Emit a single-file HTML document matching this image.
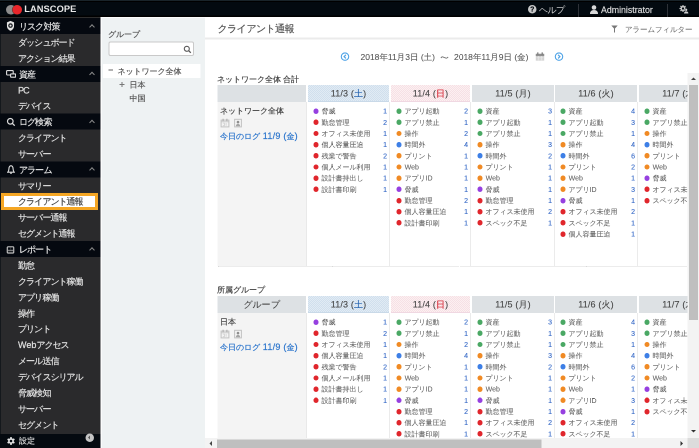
<!DOCTYPE html>
<html lang="ja"><head><meta charset="utf-8">
<style>
*{margin:0;padding:0;box-sizing:border-box}
html,body{width:699px;height:448px;overflow:hidden;background:#fff;font-family:"Liberation Sans",sans-serif;color:#333}
.abs{position:absolute}
#top{position:absolute;left:0;top:0;width:699px;height:17px;background:#030a10;border-top:1px solid #19242a;box-shadow:inset 0 1px 0 #000, inset 0 -1.5px 0 #000}
#logo{position:absolute;left:6px;top:4px;width:17px;height:11px}
#logo .g{position:absolute;left:0.2px;top:0px;width:9.6px;height:9.6px;border-radius:50%;background:#8c8c8c}
#logo .r{position:absolute;left:6.6px;top:0px;width:9.6px;height:9.6px;border-radius:50%;background:#e8262b;box-shadow:-0.6px 0 0 #5a3a30}
#brand{position:absolute;left:24.3px;top:2.2px;font-size:9.3px;font-weight:bold;color:#e8e8e8;letter-spacing:0.05px;line-height:12px;-webkit-text-stroke:0}
#side{position:absolute;left:0;top:17px;width:100.5px;height:431px;background:#2a2a2c;border-top:1px solid #2e2e2e;box-shadow:inset 1px 0 0 #14181c}
.sh{position:relative;height:15.93px;background:#050910;color:#e4e4e4;font-size:9px;letter-spacing:-0.9px;line-height:17px;padding-left:19px}
.si{position:absolute;left:6px;top:0;height:16px;display:flex;align-items:center}
.car{position:absolute;left:89.8px;top:6.8px;width:4px;height:4px;border-left:1.3px solid #8a8a8a;border-top:1.3px solid #8a8a8a;transform:rotate(45deg)}
.sit{height:15.93px;color:#e0e0e0;font-size:9px;letter-spacing:-0.9px;line-height:17px;padding-left:18px}
#sel{position:absolute;left:1px;top:193px;width:97px;height:17px;border:3px solid #f5a623;background:#fff;color:#444;font-size:9px;letter-spacing:-0.9px;line-height:11.5px;padding-left:14px}
#bot{position:absolute;left:0;top:434px;width:101px;height:14px;background:#050a10;color:#ddd;font-size:8px;line-height:14px;padding-left:19px}
#grp{position:absolute;left:100.5px;top:17px;width:104.5px;height:431px;background:#eef2f3;border-left:1.5px solid #fbfcfc;border-top:1px solid #fbfcfc}
#main{position:absolute;left:205px;top:17px;width:494px;height:431px;background:#fff}
.th{position:absolute;height:17px;font-size:9px;line-height:17px;text-align:center;color:#444;letter-spacing:0.15px;-webkit-text-stroke:0.1px currentColor}
.hg{background:#dde1e4}
.hb{background-color:#d2e1ee;background-image:repeating-conic-gradient(#d0dfed 0 25%, #e1ebf4 0 50%);background-size:2px 2px;border-bottom:1px solid #c9d9e8}
.hp{background-color:#f6e0e4;background-image:repeating-conic-gradient(#f6e0e5 0 25%, #fcf0f1 0 50%);background-size:2px 2px;border-bottom:1px solid #f0d8e2}
.sat{color:#2563b0} .sun{color:#d0101e}
.lc{position:absolute;background:#f4f4f4;border-right:1px solid #e9e9e9}
.nm{position:absolute;font-size:8px;line-height:10px;color:#444;white-space:nowrap}
.lnk{position:absolute;font-size:8px;line-height:10px;color:#2a74cc;white-space:nowrap}
.ic1,.ic2{position:absolute;width:8px;height:8px;border:1px solid #c4c4c4;border-radius:1px}
.vl{position:absolute;width:1px;background:#ebebeb}
.bl{position:absolute;height:1px;border-top:1px dotted #d8d8d8}
.it{position:absolute;height:11px;font-size:7px;line-height:11px;white-space:nowrap}
.it i{position:absolute;left:5.3px;top:2.9px;width:5.4px;height:5.4px;border-radius:50%}
.it b{position:absolute;left:13.6px;top:0;font-weight:normal;color:#606060;-webkit-text-stroke:0.05px #606060}
.it u{position:absolute;right:2px;top:0;text-decoration:none;color:#3a6cc8;-webkit-text-stroke:0.12px #3a6cc8}
#wrap{position:absolute;left:0;top:0;width:1398px;height:896px;transform:scale(0.5);transform-origin:0 0;will-change:transform;overflow:hidden}
#inner{position:absolute;left:0;top:0;width:699px;height:448px;zoom:2;overflow:hidden;-webkit-text-stroke:0.2px currentColor}
</style></head><body><div id="wrap"><div id="inner">
<div id="top">
 <div id="logo"><div class="g"></div><div class="r"></div></div>
 <div id="brand">LANSCOPE</div>
 <div class="abs" style="left:528px;top:4px;width:8.5px;height:8.5px;border-radius:50%;background:#c8c8c8;color:#050b12;font-size:7px;font-weight:bold;line-height:8.5px;text-align:center">?</div>
 <div class="abs" style="left:539px;top:3px;font-size:9px;letter-spacing:-0.6px;-webkit-text-stroke:0.05px #ccc;line-height:12px;color:#ccc">ヘルプ</div>
 <div class="abs" style="left:578px;top:3px;width:1px;height:14px;background:#2e3238"></div>
 <svg class="abs" style="left:590px;top:4px" width="8" height="9" viewBox="0 0 8 9"><circle cx="4" cy="2.5" r="2.3" fill="#d8d8d8"/><path d="M0 9 Q0 5 4 5 Q8 5 8 9 Z" fill="#d8d8d8"/></svg>
 <div class="abs" style="left:601px;top:3px;font-size:8.8px;line-height:12px;color:#d8d8d8">Administrator</div>
 <div class="abs" style="left:667px;top:3px;width:1px;height:14px;background:#2e3238"></div>
 <svg class="abs" style="left:679px;top:3.5px" width="10" height="9" viewBox="0 0 10 9"><path fill-rule="evenodd" fill="#c8c8c8" d="M3.37 0.46 L4.63 0.46 L4.56 1.46 L5.40 1.81 L6.06 1.05 L6.95 1.94 L6.19 2.60 L6.54 3.44 L7.54 3.37 L7.54 4.63 L6.54 4.56 L6.19 5.40 L6.95 6.06 L6.06 6.95 L5.40 6.19 L4.56 6.54 L4.63 7.54 L3.37 7.54 L3.44 6.54 L2.60 6.19 L1.94 6.95 L1.05 6.06 L1.81 5.40 L1.46 4.56 L0.46 4.63 L0.46 3.37 L1.46 3.44 L1.81 2.60 L1.05 1.94 L1.94 1.05 L2.60 1.81 L3.44 1.46 Z M5.10 4.00 A1.1 1.1 0 1 0 2.90 4.00 A1.1 1.1 0 1 0 5.10 4.00 Z"/><circle cx="7.2" cy="5.3" r="1.5" fill="#050b12"/><circle cx="7.2" cy="5.4" r="1.1" fill="#d0d0d0"/><path d="M5 9 Q5.2 6.9 7.2 6.9 Q9.2 6.9 9.4 9 Z" fill="#d0d0d0"/></svg>
</div>
<div id="side">
<div class="sh" style="height:16px"><span class="si"><svg width="9" height="11" viewBox="0 0 9 11"><path d="M4.5 0.4 L8.1 1.9 L8 6.2 Q7.6 8.9 4.5 10.4 Q1.4 8.9 1 6.2 L0.9 1.9 Z" fill="#e4e4e4"/><circle cx="4.5" cy="5.1" r="2.3" fill="#22252a"/><circle cx="4.5" cy="5.1" r="1" fill="#e8e8e8"/></svg></span>リスク対策<span class="car"></span></div><div class="sit">ダッシュボード</div><div class="sit">アクション結果</div><div class="sh"><span class="si"><svg width="10" height="8" viewBox="0 0 10 8"><rect x="0.6" y="0.6" width="6.6" height="4.4" rx="0.7" fill="none" stroke="#ddd" stroke-width="1.1"/><rect x="4.6" y="3.9" width="5" height="3.3" rx="0.5" fill="#060a10" stroke="#ddd" stroke-width="1.1"/></svg></span>資産<span class="car"></span></div><div class="sit">PC</div><div class="sit">デバイス</div><div class="sh"><span class="si"><svg width="9" height="9" viewBox="0 0 9 9" style="position:relative;left:0.5px;top:0.6px"><circle cx="3.8" cy="3.8" r="2.8" fill="none" stroke="#ddd" stroke-width="1.2"/><path d="M5.8 5.8 L8.2 8.2" stroke="#ddd" stroke-width="1.3"/></svg></span>ログ検索<span class="car"></span></div><div class="sit">クライアント</div><div class="sit">サーバー</div><div class="sh"><span class="si"><svg width="8" height="9" viewBox="0 0 8 9" style="position:relative;left:0.9px;top:0.3px"><path d="M4 0.7 Q6 0.9 6.1 4 Q6.2 6 7.2 7.2 L0.8 7.2 Q1.8 6 1.9 4 Q2 0.9 4 0.7 Z" fill="none" stroke="#ddd" stroke-width="1.1"/><path d="M3 8.2 H5" stroke="#ddd" stroke-width="1"/></svg></span>アラーム<span class="car"></span></div><div class="sit">サマリー</div><div class="sit">クライアント通報</div><div class="sit">サーバー通報</div><div class="sit">セグメント通報</div><div class="sh"><span class="si"><svg width="8" height="8" viewBox="0 0 8 8" style="position:relative;left:0.7px;top:0.8px"><rect x="0.2" y="0.2" width="7.6" height="7.4" rx="1.5" fill="#c4c4c4"/><rect x="1.3" y="1.3" width="5.4" height="5.2" rx="0.4" fill="#3a3d42"/><rect x="1.6" y="1.6" width="2" height="1.9" fill="#050910"/><rect x="4.4" y="1.6" width="2" height="1.9" fill="#050910"/><rect x="1.3" y="4.3" width="5.4" height="0.8" fill="#9a9a9a"/><rect x="1.6" y="5.1" width="4.8" height="1" fill="#15181c"/></svg></span>レポート<span class="car"></span></div><div class="sit">勤怠</div><div class="sit">クライアント稼働</div><div class="sit">アプリ稼働</div><div class="sit">操作</div><div class="sit">プリント</div><div class="sit"><span style="letter-spacing:0">Web</span>アクセス</div><div class="sit">メール送信</div><div class="sit">デバイスシリアル</div><div class="sit">脅威検知</div><div class="sit">サーバー</div><div class="sit">セグメント</div>
</div>
<div id="sel">クライアント通報</div>
<div id="bot"><svg class="abs" style="left:7px;top:3.2px" width="8" height="8" viewBox="0 0 8 8"><path fill-rule="evenodd" fill="#e4e4e4" d="M3.07 0.11 L4.93 0.11 L4.82 1.22 L6.00 1.90 L6.90 1.25 L7.84 2.86 L6.82 3.32 L6.82 4.68 L7.84 5.14 L6.90 6.75 L6.00 6.10 L4.82 6.78 L4.93 7.89 L3.07 7.89 L3.18 6.78 L2.00 6.10 L1.10 6.75 L0.16 5.14 L1.18 4.68 L1.18 3.32 L0.16 2.86 L1.10 1.25 L2.00 1.90 L3.18 1.22 Z M5.30 4.00 A1.3 1.3 0 1 0 2.70 4.00 A1.3 1.3 0 1 0 5.30 4.00 Z"/></svg>設定
 <div class="abs" style="left:85.5px;top:-0.6px;width:8.5px;height:8.5px;border-radius:50%;background:#c4c4c4"><div style="position:absolute;left:2.6px;top:2.2px;width:0;height:0;border-top:2px solid transparent;border-bottom:2px solid transparent;border-right:2.2px solid #555"></div></div>
</div>
<div id="grp">
 <div class="abs" style="left:5.8px;top:11.5px;font-size:8px;line-height:10px;color:#555">グループ</div>
 <div class="abs" style="left:6.5px;top:23.5px;width:85.5px;height:14.5px;background:#fff;border:1px solid #c9c9c9;border-radius:2px"></div>
 <svg class="abs" style="left:81.5px;top:27.5px" width="8" height="8" viewBox="0 0 8 8"><circle cx="3.3" cy="3.3" r="2.5" fill="none" stroke="#5a5a5a" stroke-width="1.1"/><path d="M5.1 5.1 L7.3 7.3" stroke="#5a5a5a" stroke-width="1.3"/></svg>
 <div class="abs" style="left:1px;top:46px;width:97.5px;height:14px;background:#fff"></div>
 <div class="abs" style="left:6.5px;top:51.5px;width:4.5px;height:1px;background:#666"></div>
 <div class="abs" style="left:15.5px;top:48.5px;font-size:8px;line-height:10px;color:#555">ネットワーク全体</div>
 <div class="abs" style="left:17.5px;top:65.8px;width:5px;height:1px;background:#777"></div>
 <div class="abs" style="left:19.5px;top:63.8px;width:1px;height:5px;background:#777"></div>
 <div class="abs" style="left:27.5px;top:61.8px;font-size:8px;line-height:10px;color:#555">日本</div>
 <div class="abs" style="left:27.5px;top:75.3px;font-size:8px;line-height:10px;color:#555">中国</div>
</div>
<div id="main">
 <div class="abs" style="left:12.5px;top:5.5px;font-size:10px;letter-spacing:-0.4px;line-height:12px;color:#555">クライアント通報</div>
 <div class="abs" style="left:0;top:20.5px;width:494px;height:2px;background:#ebebeb"></div>
 <svg class="abs" style="left:406px;top:8px" width="7" height="8" viewBox="0 0 7 8"><path d="M0.3 0.5 H6.7 L4 3.5 V7.5 H3 V3.5 Z" fill="#777"/></svg>
 <div class="abs" style="left:420px;top:8px;font-size:7.6px;line-height:9px;color:#707070;-webkit-text-stroke:0.05px #707070">アラームフィルター</div>
 <svg class="abs" style="left:135.5px;top:35px" width="9" height="9" viewBox="0 0 9 9"><circle cx="4.5" cy="4.6" r="3.7" fill="none" stroke="#4fa3e6" stroke-width="1.1"/><path d="M5.4 2.8 L3.6 4.6 L5.4 6.4" fill="none" stroke="#4fa3e6" stroke-width="1.2"/></svg>
 <div class="abs" style="left:155.5px;top:35px;font-size:8.5px;line-height:11px;color:#555;-webkit-text-stroke:0.08px #555;white-space:nowrap">2018年11月3日 (土)</div><svg class="abs" style="left:235.5px;top:38.5px" width="8" height="4" viewBox="0 0 8 4"><path d="M0.4 2.6 Q1.2 0.9 2.6 1.5 Q4 2.2 5.4 2.6 Q6.8 2.9 7.6 1.4" fill="none" stroke="#666" stroke-width="0.9"/></svg><div class="abs" style="left:249px;top:35px;font-size:8.5px;line-height:11px;color:#555;-webkit-text-stroke:0.08px #555;white-space:nowrap">2018年11月9日 (金)</div>
 <svg class="abs" style="left:330.5px;top:35px" width="9" height="9" viewBox="0 0 9 9"><rect x="0.3" y="1.8" width="8.4" height="6.8" fill="#cfcfcf"/><rect x="0.3" y="1.8" width="8.4" height="2.2" fill="#8f8f8f"/><path d="M2.3 0.4 V2.6 M6.7 0.4 V2.6" stroke="#777" stroke-width="1.2"/><path d="M1 5.3 H8 M1 7 H8 M3 4 V8.3 M6 4 V8.3" stroke="#eee" stroke-width="0.5"/></svg>
 <svg class="abs" style="left:349.5px;top:35px" width="9" height="9" viewBox="0 0 9 9"><circle cx="4.5" cy="4.6" r="3.7" fill="none" stroke="#4fa3e6" stroke-width="1.1"/><path d="M3.6 2.8 L5.4 4.6 L3.6 6.4" fill="none" stroke="#4fa3e6" stroke-width="1.2"/></svg>
</div>
<div id="tables" class="abs" style="left:0;top:0;width:699px;height:448px;overflow:hidden;clip-path:inset(73px 11px 10px 205px)">
 <div class="abs" style="left:217px;top:74.5px;font-size:8px;line-height:10px;color:#444">ネットワーク全体 合計</div>
<div class="th hg" style="left:217.5px;top:85px;width:88.5px"></div>
<div class="th hb" style="left:308px;top:85px;width:81px">11/3 (<span class="sat">土</span>)</div>
<div class="th hp" style="left:391px;top:85px;width:79px">11/4 (<span class="sun">日</span>)</div>
<div class="th hg" style="left:472px;top:85px;width:82px">11/5 (月)</div>
<div class="th hg" style="left:555px;top:85px;width:82px">11/6 (火)</div>
<div class="th hg" style="left:639px;top:85px;width:82px">11/7 (水)</div>
<div class="lc" style="left:217.5px;top:102px;width:89.5px;height:164px"></div>
<div class="nm" style="left:220px;top:106px">ネットワーク全体</div>
<svg class="abs" style="left:220.5px;top:118.5px" width="9" height="9" viewBox="0 0 9 9"><rect x="0.6" y="1.6" width="7.8" height="6.8" fill="none" stroke="#c2c2c2" stroke-width="1"/><path d="M0.6 3.3 H8.4" stroke="#c2c2c2" stroke-width="0.8"/><path d="M2.6 0.2 V2.6 M6.4 0.2 V2.6" stroke="#a8a8a8" stroke-width="1"/><path d="M2.3 4.6 H3.9 V7.2 H2.3 M5.6 4.4 V7.3" fill="none" stroke="#cfcfcf" stroke-width="0.8"/></svg><svg class="abs" style="left:234px;top:118.5px" width="8" height="9" viewBox="0 0 8 9"><rect x="0.6" y="0.8" width="6.8" height="7.6" fill="none" stroke="#c2c2c2" stroke-width="1"/><circle cx="4" cy="3.6" r="1.3" fill="#8e8e8e"/><path d="M1.8 7.8 Q2 5.4 4 5.4 Q6 5.4 6.2 7.8 Z" fill="#a5a5a5"/></svg>
<div class="lnk" style="left:220px;top:131px">今日のログ<span style="font-size:9px;letter-spacing:0.25px"> 11/9 (<span style="font-size:8px;letter-spacing:0">金</span>)</span></div>
<div class="vl" style="left:389px;top:102px;height:164px"></div>
<div class="it" style="left:308px;top:105.60px;width:81px"><i style="background:#9640e0"></i><b>脅威</b><u>1</u></div>
<div class="it" style="left:308px;top:116.77px;width:81px"><i style="background:#e0262c"></i><b>勤怠管理</b><u>2</u></div>
<div class="it" style="left:308px;top:127.94px;width:81px"><i style="background:#e0262c"></i><b>オフィス未使用</b><u>1</u></div>
<div class="it" style="left:308px;top:139.11px;width:81px"><i style="background:#e0262c"></i><b>個人容量圧迫</b><u>1</u></div>
<div class="it" style="left:308px;top:150.28px;width:81px"><i style="background:#e0262c"></i><b>残業で警告</b><u>2</u></div>
<div class="it" style="left:308px;top:161.45px;width:81px"><i style="background:#e0262c"></i><b>個人メール利用</b><u>1</u></div>
<div class="it" style="left:308px;top:172.62px;width:81px"><i style="background:#e0262c"></i><b>設計書持出し</b><u>1</u></div>
<div class="it" style="left:308px;top:183.79px;width:81px"><i style="background:#e0262c"></i><b>設計書印刷</b><u>1</u></div>
<div class="vl" style="left:470px;top:102px;height:164px"></div>
<div class="it" style="left:391px;top:105.60px;width:79px"><i style="background:#4aa864"></i><b>アプリ起動</b><u>2</u></div>
<div class="it" style="left:391px;top:116.77px;width:79px"><i style="background:#4aa864"></i><b>アプリ禁止</b><u>1</u></div>
<div class="it" style="left:391px;top:127.94px;width:79px"><i style="background:#f08a24"></i><b>操作</b><u>2</u></div>
<div class="it" style="left:391px;top:139.11px;width:79px"><i style="background:#3d7fe6"></i><b>時間外</b><u>4</u></div>
<div class="it" style="left:391px;top:150.28px;width:79px"><i style="background:#f08a24"></i><b>プリント</b><u>1</u></div>
<div class="it" style="left:391px;top:161.45px;width:79px"><i style="background:#f08a24"></i><b>Web</b><u>1</u></div>
<div class="it" style="left:391px;top:172.62px;width:79px"><i style="background:#f08a24"></i><b>アプリID</b><u>1</u></div>
<div class="it" style="left:391px;top:183.79px;width:79px"><i style="background:#9640e0"></i><b>脅威</b><u>1</u></div>
<div class="it" style="left:391px;top:194.96px;width:79px"><i style="background:#e0262c"></i><b>勤怠管理</b><u>2</u></div>
<div class="it" style="left:391px;top:206.13px;width:79px"><i style="background:#e0262c"></i><b>個人容量圧迫</b><u>1</u></div>
<div class="it" style="left:391px;top:217.30px;width:79px"><i style="background:#e0262c"></i><b>設計書印刷</b><u>1</u></div>
<div class="vl" style="left:554px;top:102px;height:164px"></div>
<div class="it" style="left:472px;top:105.60px;width:82px"><i style="background:#4aa864"></i><b>資産</b><u>3</u></div>
<div class="it" style="left:472px;top:116.77px;width:82px"><i style="background:#4aa864"></i><b>アプリ起動</b><u>1</u></div>
<div class="it" style="left:472px;top:127.94px;width:82px"><i style="background:#4aa864"></i><b>アプリ禁止</b><u>1</u></div>
<div class="it" style="left:472px;top:139.11px;width:82px"><i style="background:#f08a24"></i><b>操作</b><u>3</u></div>
<div class="it" style="left:472px;top:150.28px;width:82px"><i style="background:#3d7fe6"></i><b>時間外</b><u>2</u></div>
<div class="it" style="left:472px;top:161.45px;width:82px"><i style="background:#f08a24"></i><b>プリント</b><u>1</u></div>
<div class="it" style="left:472px;top:172.62px;width:82px"><i style="background:#f08a24"></i><b>Web</b><u>1</u></div>
<div class="it" style="left:472px;top:183.79px;width:82px"><i style="background:#9640e0"></i><b>脅威</b><u>1</u></div>
<div class="it" style="left:472px;top:194.96px;width:82px"><i style="background:#e0262c"></i><b>勤怠管理</b><u>1</u></div>
<div class="it" style="left:472px;top:206.13px;width:82px"><i style="background:#e0262c"></i><b>オフィス未使用</b><u>2</u></div>
<div class="it" style="left:472px;top:217.30px;width:82px"><i style="background:#e0262c"></i><b>スペック不足</b><u>1</u></div>
<div class="vl" style="left:637px;top:102px;height:164px"></div>
<div class="it" style="left:555px;top:105.60px;width:82px"><i style="background:#4aa864"></i><b>資産</b><u>4</u></div>
<div class="it" style="left:555px;top:116.77px;width:82px"><i style="background:#4aa864"></i><b>アプリ起動</b><u>3</u></div>
<div class="it" style="left:555px;top:127.94px;width:82px"><i style="background:#4aa864"></i><b>アプリ禁止</b><u>1</u></div>
<div class="it" style="left:555px;top:139.11px;width:82px"><i style="background:#f08a24"></i><b>操作</b><u>4</u></div>
<div class="it" style="left:555px;top:150.28px;width:82px"><i style="background:#3d7fe6"></i><b>時間外</b><u>6</u></div>
<div class="it" style="left:555px;top:161.45px;width:82px"><i style="background:#f08a24"></i><b>プリント</b><u>2</u></div>
<div class="it" style="left:555px;top:172.62px;width:82px"><i style="background:#f08a24"></i><b>Web</b><u>1</u></div>
<div class="it" style="left:555px;top:183.79px;width:82px"><i style="background:#f08a24"></i><b>アプリID</b><u>3</u></div>
<div class="it" style="left:555px;top:194.96px;width:82px"><i style="background:#9640e0"></i><b>脅威</b><u>1</u></div>
<div class="it" style="left:555px;top:206.13px;width:82px"><i style="background:#e0262c"></i><b>オフィス未使用</b><u>2</u></div>
<div class="it" style="left:555px;top:217.30px;width:82px"><i style="background:#e0262c"></i><b>スペック不足</b><u>1</u></div>
<div class="it" style="left:555px;top:228.47px;width:82px"><i style="background:#e0262c"></i><b>個人容量圧迫</b><u>1</u></div>
<div class="vl" style="left:721px;top:102px;height:164px"></div>
<div class="it" style="left:639px;top:105.60px;width:82px"><i style="background:#4aa864"></i><b>資産</b><u>2</u></div>
<div class="it" style="left:639px;top:116.77px;width:82px"><i style="background:#4aa864"></i><b>アプリ禁止</b><u>1</u></div>
<div class="it" style="left:639px;top:127.94px;width:82px"><i style="background:#f08a24"></i><b>操作</b><u>1</u></div>
<div class="it" style="left:639px;top:139.11px;width:82px"><i style="background:#3d7fe6"></i><b>時間外</b><u>1</u></div>
<div class="it" style="left:639px;top:150.28px;width:82px"><i style="background:#f08a24"></i><b>プリント</b><u>1</u></div>
<div class="it" style="left:639px;top:161.45px;width:82px"><i style="background:#f08a24"></i><b>Web</b><u>1</u></div>
<div class="it" style="left:639px;top:172.62px;width:82px"><i style="background:#9640e0"></i><b>脅威</b><u>1</u></div>
<div class="it" style="left:639px;top:183.79px;width:82px"><i style="background:#e0262c"></i><b>オフィス未使用</b><u>1</u></div>
<div class="it" style="left:639px;top:194.96px;width:82px"><i style="background:#e0262c"></i><b>スペック不足</b><u>1</u></div>
<div class="bl" style="left:218px;top:266px;width:480px"></div>
 <div class="abs" style="left:217px;top:285px;font-size:8px;line-height:10px;color:#444">所属グループ</div>
<div class="th hg" style="left:217.5px;top:296px;width:88.5px">グループ</div>
<div class="th hb" style="left:308px;top:296px;width:81px">11/3 (<span class="sat">土</span>)</div>
<div class="th hp" style="left:391px;top:296px;width:79px">11/4 (<span class="sun">日</span>)</div>
<div class="th hg" style="left:472px;top:296px;width:82px">11/5 (月)</div>
<div class="th hg" style="left:555px;top:296px;width:82px">11/6 (火)</div>
<div class="th hg" style="left:639px;top:296px;width:82px">11/7 (水)</div>
<div class="lc" style="left:217.5px;top:313px;width:89.5px;height:164px"></div>
<div class="nm" style="left:220px;top:317px">日本</div>
<svg class="abs" style="left:220.5px;top:329.5px" width="9" height="9" viewBox="0 0 9 9"><rect x="0.6" y="1.6" width="7.8" height="6.8" fill="none" stroke="#c2c2c2" stroke-width="1"/><path d="M0.6 3.3 H8.4" stroke="#c2c2c2" stroke-width="0.8"/><path d="M2.6 0.2 V2.6 M6.4 0.2 V2.6" stroke="#a8a8a8" stroke-width="1"/><path d="M2.3 4.6 H3.9 V7.2 H2.3 M5.6 4.4 V7.3" fill="none" stroke="#cfcfcf" stroke-width="0.8"/></svg><svg class="abs" style="left:234px;top:329.5px" width="8" height="9" viewBox="0 0 8 9"><rect x="0.6" y="0.8" width="6.8" height="7.6" fill="none" stroke="#c2c2c2" stroke-width="1"/><circle cx="4" cy="3.6" r="1.3" fill="#8e8e8e"/><path d="M1.8 7.8 Q2 5.4 4 5.4 Q6 5.4 6.2 7.8 Z" fill="#a5a5a5"/></svg>
<div class="lnk" style="left:220px;top:342px">今日のログ<span style="font-size:9px;letter-spacing:0.25px"> 11/9 (<span style="font-size:8px;letter-spacing:0">金</span>)</span></div>
<div class="vl" style="left:389px;top:313px;height:164px"></div>
<div class="it" style="left:308px;top:316.60px;width:81px"><i style="background:#9640e0"></i><b>脅威</b><u>1</u></div>
<div class="it" style="left:308px;top:327.77px;width:81px"><i style="background:#e0262c"></i><b>勤怠管理</b><u>2</u></div>
<div class="it" style="left:308px;top:338.94px;width:81px"><i style="background:#e0262c"></i><b>オフィス未使用</b><u>1</u></div>
<div class="it" style="left:308px;top:350.11px;width:81px"><i style="background:#e0262c"></i><b>個人容量圧迫</b><u>1</u></div>
<div class="it" style="left:308px;top:361.28px;width:81px"><i style="background:#e0262c"></i><b>残業で警告</b><u>2</u></div>
<div class="it" style="left:308px;top:372.45px;width:81px"><i style="background:#e0262c"></i><b>個人メール利用</b><u>1</u></div>
<div class="it" style="left:308px;top:383.62px;width:81px"><i style="background:#e0262c"></i><b>設計書持出し</b><u>1</u></div>
<div class="it" style="left:308px;top:394.79px;width:81px"><i style="background:#e0262c"></i><b>設計書印刷</b><u>1</u></div>
<div class="vl" style="left:470px;top:313px;height:164px"></div>
<div class="it" style="left:391px;top:316.60px;width:79px"><i style="background:#4aa864"></i><b>アプリ起動</b><u>2</u></div>
<div class="it" style="left:391px;top:327.77px;width:79px"><i style="background:#4aa864"></i><b>アプリ禁止</b><u>1</u></div>
<div class="it" style="left:391px;top:338.94px;width:79px"><i style="background:#f08a24"></i><b>操作</b><u>2</u></div>
<div class="it" style="left:391px;top:350.11px;width:79px"><i style="background:#3d7fe6"></i><b>時間外</b><u>4</u></div>
<div class="it" style="left:391px;top:361.28px;width:79px"><i style="background:#f08a24"></i><b>プリント</b><u>1</u></div>
<div class="it" style="left:391px;top:372.45px;width:79px"><i style="background:#f08a24"></i><b>Web</b><u>1</u></div>
<div class="it" style="left:391px;top:383.62px;width:79px"><i style="background:#f08a24"></i><b>アプリID</b><u>1</u></div>
<div class="it" style="left:391px;top:394.79px;width:79px"><i style="background:#9640e0"></i><b>脅威</b><u>1</u></div>
<div class="it" style="left:391px;top:405.96px;width:79px"><i style="background:#e0262c"></i><b>勤怠管理</b><u>2</u></div>
<div class="it" style="left:391px;top:417.13px;width:79px"><i style="background:#e0262c"></i><b>個人容量圧迫</b><u>1</u></div>
<div class="it" style="left:391px;top:428.30px;width:79px"><i style="background:#e0262c"></i><b>設計書印刷</b><u>1</u></div>
<div class="vl" style="left:554px;top:313px;height:164px"></div>
<div class="it" style="left:472px;top:316.60px;width:82px"><i style="background:#4aa864"></i><b>資産</b><u>3</u></div>
<div class="it" style="left:472px;top:327.77px;width:82px"><i style="background:#4aa864"></i><b>アプリ起動</b><u>1</u></div>
<div class="it" style="left:472px;top:338.94px;width:82px"><i style="background:#4aa864"></i><b>アプリ禁止</b><u>1</u></div>
<div class="it" style="left:472px;top:350.11px;width:82px"><i style="background:#f08a24"></i><b>操作</b><u>3</u></div>
<div class="it" style="left:472px;top:361.28px;width:82px"><i style="background:#3d7fe6"></i><b>時間外</b><u>2</u></div>
<div class="it" style="left:472px;top:372.45px;width:82px"><i style="background:#f08a24"></i><b>プリント</b><u>1</u></div>
<div class="it" style="left:472px;top:383.62px;width:82px"><i style="background:#f08a24"></i><b>Web</b><u>1</u></div>
<div class="it" style="left:472px;top:394.79px;width:82px"><i style="background:#9640e0"></i><b>脅威</b><u>1</u></div>
<div class="it" style="left:472px;top:405.96px;width:82px"><i style="background:#e0262c"></i><b>勤怠管理</b><u>1</u></div>
<div class="it" style="left:472px;top:417.13px;width:82px"><i style="background:#e0262c"></i><b>オフィス未使用</b><u>2</u></div>
<div class="it" style="left:472px;top:428.30px;width:82px"><i style="background:#e0262c"></i><b>スペック不足</b><u>1</u></div>
<div class="vl" style="left:637px;top:313px;height:164px"></div>
<div class="it" style="left:555px;top:316.60px;width:82px"><i style="background:#4aa864"></i><b>資産</b><u>4</u></div>
<div class="it" style="left:555px;top:327.77px;width:82px"><i style="background:#4aa864"></i><b>アプリ起動</b><u>3</u></div>
<div class="it" style="left:555px;top:338.94px;width:82px"><i style="background:#4aa864"></i><b>アプリ禁止</b><u>1</u></div>
<div class="it" style="left:555px;top:350.11px;width:82px"><i style="background:#f08a24"></i><b>操作</b><u>4</u></div>
<div class="it" style="left:555px;top:361.28px;width:82px"><i style="background:#3d7fe6"></i><b>時間外</b><u>6</u></div>
<div class="it" style="left:555px;top:372.45px;width:82px"><i style="background:#f08a24"></i><b>プリント</b><u>2</u></div>
<div class="it" style="left:555px;top:383.62px;width:82px"><i style="background:#f08a24"></i><b>Web</b><u>1</u></div>
<div class="it" style="left:555px;top:394.79px;width:82px"><i style="background:#f08a24"></i><b>アプリID</b><u>3</u></div>
<div class="it" style="left:555px;top:405.96px;width:82px"><i style="background:#9640e0"></i><b>脅威</b><u>1</u></div>
<div class="it" style="left:555px;top:417.13px;width:82px"><i style="background:#e0262c"></i><b>オフィス未使用</b><u>2</u></div>
<div class="it" style="left:555px;top:428.30px;width:82px"><i style="background:#e0262c"></i><b>スペック不足</b><u>1</u></div>
<div class="it" style="left:555px;top:439.47px;width:82px"><i style="background:#e0262c"></i><b>個人容量圧迫</b><u>1</u></div>
<div class="vl" style="left:721px;top:313px;height:164px"></div>
<div class="it" style="left:639px;top:316.60px;width:82px"><i style="background:#4aa864"></i><b>資産</b><u>2</u></div>
<div class="it" style="left:639px;top:327.77px;width:82px"><i style="background:#4aa864"></i><b>アプリ禁止</b><u>1</u></div>
<div class="it" style="left:639px;top:338.94px;width:82px"><i style="background:#f08a24"></i><b>操作</b><u>1</u></div>
<div class="it" style="left:639px;top:350.11px;width:82px"><i style="background:#3d7fe6"></i><b>時間外</b><u>1</u></div>
<div class="it" style="left:639px;top:361.28px;width:82px"><i style="background:#f08a24"></i><b>プリント</b><u>1</u></div>
<div class="it" style="left:639px;top:372.45px;width:82px"><i style="background:#f08a24"></i><b>Web</b><u>1</u></div>
<div class="it" style="left:639px;top:383.62px;width:82px"><i style="background:#9640e0"></i><b>脅威</b><u>1</u></div>
<div class="it" style="left:639px;top:394.79px;width:82px"><i style="background:#e0262c"></i><b>オフィス未使用</b><u>1</u></div>
<div class="it" style="left:639px;top:405.96px;width:82px"><i style="background:#e0262c"></i><b>スペック不足</b><u>1</u></div>
<div class="bl" style="left:218px;top:477px;width:480px"></div>
</div>
<!-- scrollbars -->
<div class="abs" style="left:687.5px;top:73px;width:11.5px;height:365px;background:#f3f3f3"></div>
<div class="abs" style="left:688.8px;top:85px;width:9.2px;height:235px;background:#bfbfbf"></div>
<div class="abs" style="left:690.8px;top:77.5px;width:0;height:0;border-left:2.6px solid transparent;border-right:2.6px solid transparent;border-bottom:2.8px solid #444"></div>
<div class="abs" style="left:690.8px;top:430px;width:0;height:0;border-left:2.6px solid transparent;border-right:2.6px solid transparent;border-top:2.8px solid #333"></div>
<div class="abs" style="left:205px;top:438px;width:482.5px;height:10px;background:#f3f3f3"></div>
<div class="abs" style="left:217.2px;top:439.3px;width:324.5px;height:8.7px;background:#bfbfbf"></div>
<div class="abs" style="left:209.5px;top:441px;width:0;height:0;border-top:2.6px solid transparent;border-bottom:2.6px solid transparent;border-right:2.8px solid #444"></div>
<div class="abs" style="left:680.3px;top:441px;width:0;height:0;border-top:2.6px solid transparent;border-bottom:2.6px solid transparent;border-left:2.8px solid #333"></div>
<div class="abs" style="left:687.5px;top:438px;width:11.5px;height:10px;background:#dcdcdc"></div>
</div></div></body></html>
